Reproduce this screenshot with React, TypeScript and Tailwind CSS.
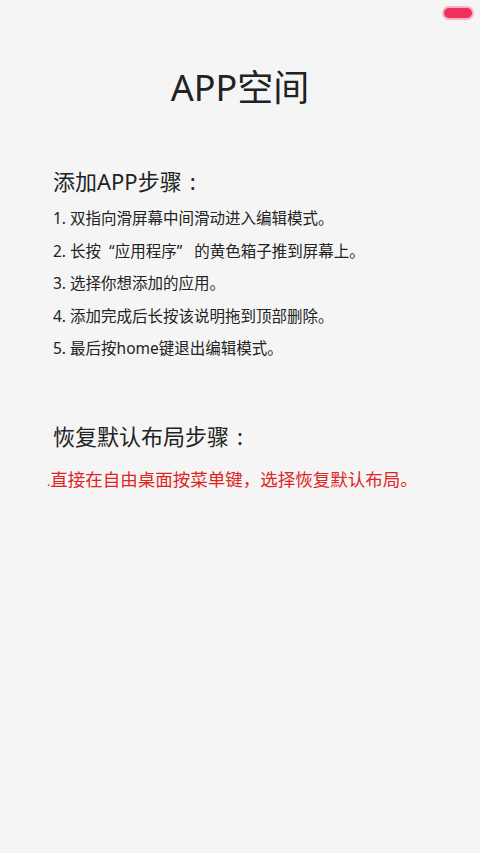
const steps = [
  '1. 双指向滑屏幕中间滑动进入编辑模式。',
  '2. 长按“应用程序”的黄色箱子推到屏幕上。',
  '3. 选择你想添加的应用。',
  '4. 添加完成后长按该说明拖到顶部删除。',
  '5. 最后按home键退出编辑模式。',
];

// full-width style quotes: pad them like the CJK punctuation in the screenshot
function StepText({ text }: { text: string }) {
  if (!text.includes('“')) return <>{text}</>;
  const [before, rest] = text.split('“');
  const [quoted, after] = rest.split('”');
  return (
    <>
      {before}
      <span className="ml-[8px]">“</span>
      {quoted}
      <span className="mr-[12px]">”</span>
      {after}
    </>
  );
}

export default function App() {
  return (
    <div
      className="min-h-[853px] w-full bg-[#f5f5f5] text-[#222]"
      style={{ fontFamily: '"Noto Sans", "Noto Sans CJK SC", sans-serif' }}
    >
      {/* status pill */}
      <div className="flex justify-end pt-[8px] pr-[8px]">
        <div className="h-[10px] w-[28px] rounded-full bg-[#ec3360] ring-2 ring-[#f7b3c3]" />
      </div>

      <h1 className="mt-[48px] text-center text-[36px] leading-[44px]">APP空间</h1>

      <div className="pl-[53px]">
        <h2 className="mt-[56px] text-[22px] leading-[30px]">
          添加APP步骤<span className="ml-[8px]">:</span>
        </h2>
        <ol className="mt-[6px]">
          {steps.map((s) => (
            <li key={s} className="text-[15.5px] leading-[32.5px]">
              <StepText text={s} />
            </li>
          ))}
        </ol>

        <h2 className="mt-[56px] text-[22px] leading-[30px]">
          恢复默认布局步骤<span className="ml-[8px]">:</span>
        </h2>
      </div>

      <p className="mt-[14px] pl-[47px] text-[17.5px] leading-[28px] text-[#e02424]">
        <span className="text-[12px]">.</span>直接在自由桌面按菜单键，选择恢复默认布局。
      </p>
    </div>
  );
}
